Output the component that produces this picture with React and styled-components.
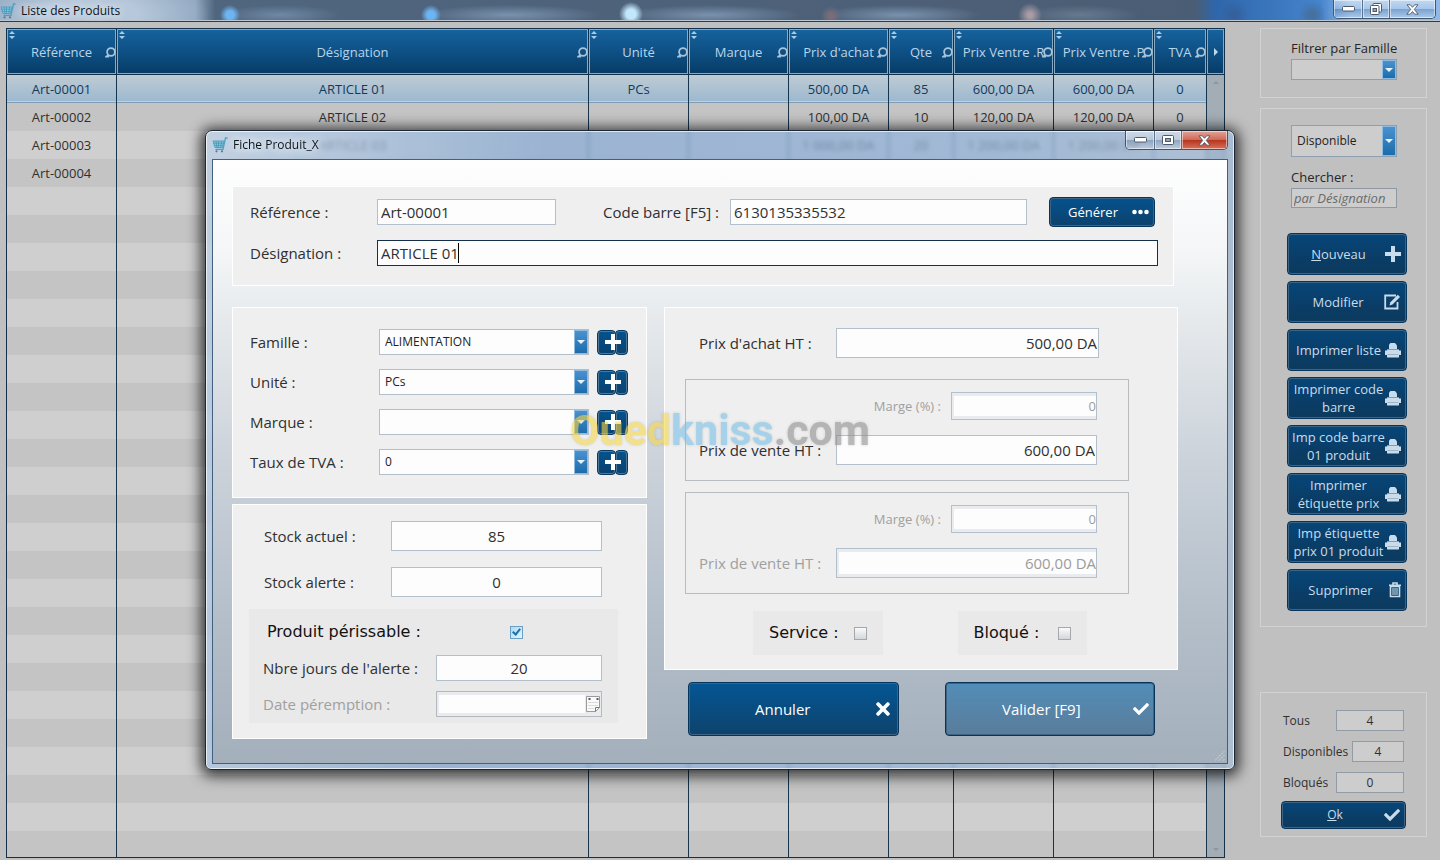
import React from "react";
import styled, { createGlobalStyle, css } from "styled-components";
import { FaCheck, FaTimes } from "react-icons/fa";

const columns = [
  { key: "ref", label: "Référence", width: 110 },
  { key: "name", label: "Désignation" },
  { key: "unit", label: "Unité", width: 100 },
  { key: "brand", label: "Marque", width: 100 },
  { key: "buy", label: "Prix d'achat", width: 100 },
  { key: "qty", label: "Qte", width: 65 },
  { key: "retail", label: "Prix Ventre .R", width: 100 },
  { key: "partner", label: "Prix Ventre .P", width: 100 },
  { key: "vat", label: "TVA", width: 53 },
];

const products = [
  {
    ref: "Art-00001",
    name: "ARTICLE 01",
    unit: "PCs",
    buy: "500,00 DA",
    qty: "85",
    retail: "600,00 DA",
    partner: "600,00 DA",
    vat: "0",
  },
  {
    ref: "Art-00002",
    name: "ARTICLE 02",
    buy: "100,00 DA",
    qty: "10",
    retail: "120,00 DA",
    partner: "120,00 DA",
    vat: "0",
  },
  {
    ref: "Art-00003",
    name: "ARTICLE 03",
    buy: "1 000,00 DA",
    qty: "20",
    retail: "1 200,00 DA",
    partner: "1 200,00 DA",
  },
  { ref: "Art-00004" },
];

const rows = [...products, ...Array.from({ length: 24 }, () => ({}))];

/* icons */

const CartIcon = () => (
  <svg width="16" height="16" viewBox="0 0 16 16" fill="none">
    <path d="M1 4h11l-1.5 6.5H3z" fill="#8cc6dc" stroke="#4fa3c4" />
    <path
      d="M4 4l1 6.500M6.500 4v6.500M9.500 4l-.7 6.500M1.500 6.200h10M2 8.400h9"
      stroke="#3f93b5"
      strokeWidth=".7"
    />
    <path d="M15.500 1h-2L11 12.300H3.500" stroke="#4fa0bf" strokeWidth="1.300" />
    <circle cx="4.500" cy="14.300" r="1.100" fill="#4b7d94" />
    <circle cx="10" cy="14.300" r="1.100" fill="#4b7d94" />
  </svg>
);

const SortIcon = () => (
  <svg width="6" height="8" viewBox="0 0 6 8">
    <path d="M3 0l3 3H0zM3 8L0 5h6z" fill="#a9cde8" />
  </svg>
);

const SearchIcon = () => (
  <svg width="11" height="11" viewBox="0 0 11 11" fill="none">
    <circle cx="6" cy="5" r="3.900" stroke="#a8c4d8" strokeWidth="1.800" />
    <path d="M3.300 7.800L.8 9.700h3.200" stroke="#a8c4d8" strokeWidth="1.400" />
  </svg>
);

const PlusIcon = ({ size = 16 }) => (
  <svg width={size} height={size} viewBox="0 0 16 16">
    <path d="M6 0h4v6h6v4h-6v6H6v-6H0V6h6z" fill="currentColor" />
  </svg>
);

const EditIcon = () => (
  <svg width="17" height="16" viewBox="0 0 17 16" fill="none">
    <path
      d="M12 1.500H1.200V14.500H13.500V8"
      stroke="currentColor"
      strokeWidth="1.800"
    />
    <path d="M5.500 11.500l.9-3.200L13.800.8l2.200 2.100-7.500 7.600z" fill="currentColor" />
  </svg>
);

const PrinterIcon = () => (
  <svg width="16" height="16" viewBox="0 0 16 16">
    <path d="M4 7V2.500L5.500 1H10l2 2.500V7z" fill="currentColor" />
    <path d="M0 8.500h2V7.500h12v1h2V13h-2v2.500H2V13H0z" fill="currentColor" />
    <path d="M2 7.500h12M2.500 12.500h11" stroke="#8fa3b3" strokeWidth=".7" />
  </svg>
);

const TrashIcon = () => (
  <svg width="12" height="16" viewBox="0 0 12 16" fill="none">
    <path d="M0 3.200h12M4 3V1h4v2" stroke="currentColor" strokeWidth="1.600" />
    <path d="M1.500 4.500h9v10h-9z" stroke="currentColor" strokeWidth="1.600" />
    <path d="M4 6v7M6 6v7M8 6v7" stroke="currentColor" strokeWidth="1.100" />
  </svg>
);

const DotsIcon = () => (
  <svg width="17" height="6" viewBox="0 0 17 6" fill="currentColor">
    <circle cx="2.500" cy="3" r="2.300" />
    <circle cx="8.500" cy="3" r="2.300" />
    <circle cx="14.500" cy="3" r="2.300" />
  </svg>
);

const CalendarIcon = () => (
  <svg width="16" height="18" viewBox="0 0 16 18" fill="none">
    <path d="M1.500 1.500h13v11l-4 4h-9z" fill="#fafafa" stroke="#9a9a9a" />
    <path d="M14.500 12.500h-4v4" stroke="#777" />
    <path d="M3 4h3M4.500 3v2M11 4h3M12.500 3v2" stroke="#555" />
    <path
      d="M3.500 7.500h9M3.500 10.500h9M3.500 13.500h5"
      stroke="#bbb"
      strokeDasharray="1 1"
    />
  </svg>
);

const MinimizeGlyph = () => (
  <svg width="13" height="6" viewBox="0 0 13 6">
    <rect x=".5" y=".5" width="12" height="4.500" rx="1" fill="#fff" stroke="#4d5a6b" />
  </svg>
);

const MaximizeGlyph = () => (
  <svg width="12" height="10" viewBox="0 0 12 10" fill="none">
    <rect x=".5" y=".5" width="11" height="9" rx="1" fill="#fff" stroke="#4d5a6b" />
    <rect x="3.500" y="3.500" width="5" height="3" fill="#8ea4bf" stroke="#4d5a6b" />
  </svg>
);

const RestoreGlyph = () => (
  <svg width="12" height="12" viewBox="0 0 12 12" fill="none">
    <rect x="3" y=".5" width="8.500" height="8.500" rx="1" fill="#fff" stroke="#4d5a6b" />
    <rect x=".5" y="2.500" width="8.500" height="9" rx="1" fill="#fff" stroke="#4d5a6b" />
    <rect x="3" y="5.500" width="3.500" height="3" fill="#8ea4bf" stroke="#4d5a6b" />
  </svg>
);

const CloseGlyph = () => (
  <svg width="13" height="11" viewBox="0 0 13 11">
    <path
      d="M1 .8h3.300l2.200 2.500L8.700.8H12L8.300 5.400l3.900 4.800H8.800L6.500 7.500l-2.300 2.700H.8l3.900-4.800z"
      fill="#fff"
      stroke="#4d5a6b"
      strokeWidth=".9"
    />
  </svg>
);

const WindowControls = ({ glass }) => (
  <Controls>
    <ControlButton aria-label="Réduire" $width={28}>
      <MinimizeGlyph />
    </ControlButton>
    <ControlButton aria-label="Agrandir" $width={27}>
      {glass ? <RestoreGlyph /> : <MaximizeGlyph />}
    </ControlButton>
    <ControlButton aria-label="Fermer" $width={46} $danger={!glass}>
      <CloseGlyph />
    </ControlButton>
  </Controls>
);

const Combo = ({ id, value, label, height, dimmed }) => (
  <ComboBox $height={height}>
    <ComboSelect id={id} defaultValue={value} aria-label={label} $dimmed={dimmed}>
      <option value={value}>{value}</option>
    </ComboSelect>
    <ComboArrow />
  </ComboBox>
);

const ProductTable = () => (
  <TableFrame>
    <Table>
      <colgroup>
        {columns.map((col) => (
          <col key={col.key} width={col.width} />
        ))}
      </colgroup>
      <thead>
        <tr>
          {columns.map((col) => (
            <HeadCell key={col.key}>
              <SortMark>
                <SortIcon />
              </SortMark>
              {col.label}
              <SearchMark>
                <SearchIcon />
              </SearchMark>
            </HeadCell>
          ))}
        </tr>
      </thead>
      <tbody>
        {rows.map((row, i) => (
          <Row key={i} $selected={i === 0}>
            {columns.map((col) => (
              <Cell key={col.key}>{row[col.key]}</Cell>
            ))}
          </Row>
        ))}
      </tbody>
    </Table>
    <Rail>
      <RailHead aria-label="Colonnes suivantes">
        <Triangle $dir="right" />
      </RailHead>
      <RailTrack>
        <Triangle $dir="up" />
        <Triangle $dir="down" />
      </RailTrack>
    </Rail>
  </TableFrame>
);

const actions = [
  { label: "Modifier", icon: <EditIcon /> },
  { label: "Imprimer liste", icon: <PrinterIcon /> },
  { label: "Imprimer code barre", icon: <PrinterIcon /> },
  { label: "Imp code barre 01 produit", icon: <PrinterIcon /> },
  { label: "Imprimer étiquette prix", icon: <PrinterIcon /> },
  { label: "Imp étiquette prix 01 produit", icon: <PrinterIcon /> },
  { label: "Supprimer", icon: <TrashIcon /> },
];

const Sidebar = () => (
  <Aside>
    <FilterBox>
      <SideLabel htmlFor="filter">Filtrer par Famille</SideLabel>
      <Combo id="filter" value="" height={21} dimmed />
    </FilterBox>
    <ActionBox>
      <SearchGroup>
        <Combo value="Disponible" label="Disponibilité" height={32} dimmed />
        <SideLabel htmlFor="search">Chercher :</SideLabel>
        <SearchInput id="search" placeholder="par Désignation" />
      </SearchGroup>
      <ActionList>
        <ActionButton>
          <ButtonText>
            <u>N</u>ouveau
          </ButtonText>
          <PlusIcon />
        </ActionButton>
        {actions.map((action) => (
          <ActionButton key={action.label}>
            <ButtonText>{action.label}</ButtonText>
            {action.icon}
          </ActionButton>
        ))}
      </ActionList>
    </ActionBox>
    <TotalsBox>
      <TotalRow>
        <label htmlFor="all">Tous</label>
        <TotalInput id="all" defaultValue="4" $width={68} />
      </TotalRow>
      <TotalRow>
        <label htmlFor="available">Disponibles</label>
        <TotalInput id="available" defaultValue="4" $width={52} />
      </TotalRow>
      <TotalRow>
        <label htmlFor="blocked">Bloqués</label>
        <TotalInput id="blocked" defaultValue="0" $width={68} />
      </TotalRow>
      <OkButton>
        <ButtonText>
          <u>O</u>k
        </ButtonText>
        <FaCheck size={16} />
      </OkButton>
    </TotalsBox>
  </Aside>
);

const ProductDialog = () => (
  <Overlay>
    <Dialog role="dialog" aria-label="Fiche Produit_X">
      <DialogTitle>
        <CartIcon />
        <TitleText>Fiche Produit_X</TitleText>
        <WindowControls />
      </DialogTitle>
      <DialogBody>
        <IdentityPanel>
          <IdentityRow>
            <IdentityLabel htmlFor="ref">Référence :</IdentityLabel>
            <RefInput id="ref" defaultValue="Art-00001" />
            <IdentityLabel htmlFor="barcode">Code barre [F5] :</IdentityLabel>
            <TextInput id="barcode" defaultValue="6130135335532" />
            <GenerateButton>
              <ButtonText>Générer</ButtonText>
              <DotsIcon />
            </GenerateButton>
          </IdentityRow>
          <IdentityRow>
            <IdentityLabel htmlFor="name">Désignation :</IdentityLabel>
            <ActiveInput id="name" defaultValue="ARTICLE 01" />
          </IdentityRow>
        </IdentityPanel>

        <Columns>
          <LeftColumn>
            <ClassPanel>
              {[
                ["family", "Famille :", "ALIMENTATION"],
                ["unit", "Unité :", "PCs"],
                ["brand", "Marque :", ""],
                ["vat", "Taux de TVA :", "0"],
              ].map(([id, label, value]) => (
                <ClassRow key={id}>
                  <label htmlFor={id}>{label}</label>
                  <Combo id={id} value={value} height={26} />
                  <AddButton aria-label={`Ajouter ${label}`}>
                    <PlusIcon />
                  </AddButton>
                </ClassRow>
              ))}
            </ClassPanel>

            <StockPanel>
              <StockRow>
                <label htmlFor="stock">Stock actuel :</label>
                <CenterInput id="stock" defaultValue="85" $height={30} />
              </StockRow>
              <StockRow>
                <label htmlFor="alert">Stock alerte :</label>
                <CenterInput id="alert" defaultValue="0" $height={30} />
              </StockRow>
              <PerishBox>
                <PerishRow>
                  <BigLabel htmlFor="perish">Produit périssable :</BigLabel>
                  <PerishCheck id="perish" type="checkbox" defaultChecked />
                </PerishRow>
                <PerishRow>
                  <label htmlFor="days">Nbre jours de l'alerte :</label>
                  <CenterInput id="days" defaultValue="20" />
                </PerishRow>
                <PerishRow $muted>
                  <label htmlFor="expiry">Date péremption :</label>
                  <DateField>
                    <DateInput id="expiry" disabled />
                    <CalendarIcon />
                  </DateField>
                </PerishRow>
              </PerishBox>
            </StockPanel>
          </LeftColumn>

          <RightColumn>
            <PricePanel>
              <BuyRow>
                <label htmlFor="buy">Prix d'achat HT :</label>
                <PriceInput id="buy" defaultValue="500,00 DA" $height={30} />
              </BuyRow>
              <SellGroup>
                <MarginRow>
                  <label htmlFor="margin1">Marge (%) :</label>
                  <MarginInput id="margin1" defaultValue="0" disabled />
                </MarginRow>
                <PriceRow>
                  <label htmlFor="sell1">Prix de vente HT :</label>
                  <PriceInput id="sell1" defaultValue="600,00 DA" $height={30} />
                </PriceRow>
              </SellGroup>
              <SellGroup>
                <MarginRow>
                  <label htmlFor="margin2">Marge (%) :</label>
                  <MarginInput id="margin2" defaultValue="0" disabled />
                </MarginRow>
                <PriceRow $muted>
                  <label htmlFor="sell2">Prix de vente HT :</label>
                  <PriceInput
                    id="sell2"
                    defaultValue="600,00 DA"
                    $height={30}
                    disabled
                  />
                </PriceRow>
              </SellGroup>
              <FlagRow>
                <Flag>
                  <BigLabel htmlFor="service">Service :</BigLabel>
                  <Check id="service" type="checkbox" />
                </Flag>
                <Flag>
                  <BigLabel htmlFor="locked">Bloqué :</BigLabel>
                  <Check id="locked" type="checkbox" />
                </Flag>
              </FlagRow>
            </PricePanel>
            <DialogActions>
              <DialogButton>
                <ButtonText>Annuler</ButtonText>
                <FaTimes size={20} />
              </DialogButton>
              <DialogButton $light>
                <ButtonText>Valider [F9]</ButtonText>
                <FaCheck size={16} />
              </DialogButton>
            </DialogActions>
          </RightColumn>
        </Columns>
        <Grip width="10" height="10" viewBox="0 0 10 10">
          <path
            d="M0 9.500L9.500 0M4 9.500L9.500 4M8 9.500L9.500 8"
            stroke="#e2e8ee"
            strokeDasharray="1.500 1.500"
          />
        </Grip>
      </DialogBody>
    </Dialog>
  </Overlay>
);

const App = () => (
  <Page>
    <GlobalStyle />
    <TitleBar>
      <CartIcon />
      <TitleText>Liste des Produits</TitleText>
      <WindowControls glass />
    </TitleBar>
    <Main>
      <ProductTable />
      <Sidebar />
    </Main>
    <ProductDialog />
    <Watermark>
      <span>
        <WatermarkPart $color="#f5d547">Oued</WatermarkPart>
        <WatermarkPart $color="#73bfe6">kniss</WatermarkPart>
        <WatermarkPart $color="#8c8c8c">.com</WatermarkPart>
      </span>
    </Watermark>
  </Page>
);

const GlobalStyle = createGlobalStyle`
  *, *::before, *::after {
    box-sizing: border-box;
  }
  body {
    margin: 0;
    background: #c0c0c0;
    color: #303030;
    font: 13px/18px "Open Sans", "Noto Sans", sans-serif;
  }
  button, input, select {
    margin: 0;
    font: inherit;
    color: inherit;
    outline: none;
  }
  svg {
    flex: none;
  }
`;

const Page = styled.div`
  display: flex;
  flex-direction: column;
  height: 100vh;
  overflow: hidden;
`;

const TitleBar = styled.header`
  display: flex;
  flex: none;
  gap: 5px;
  height: 22px;
  padding: 0 4px 0 0;
  border-bottom: 1px solid #2c3c50;
  box-shadow: inset 0 -1px #b9c6d4;
  background:
    radial-gradient(ellipse 120px 40px at 90px 14px, #b7c8da 40%, transparent),
    radial-gradient(circle 10px at 230px 15px, #6db4f2 40%, transparent),
    radial-gradient(circle 10px at 431px 15px, #6db4f2 40%, transparent),
    radial-gradient(circle 12px at 631px 14px, #c2e6fb 40%, transparent),
    radial-gradient(circle 10px at 831px 16px, #7a6d78 20%, transparent),
    radial-gradient(circle 12px at 1030px 15px, #a99ca5 20%, transparent),
    radial-gradient(circle 14px at 1234px 15px, #34619c 20%, transparent),
    radial-gradient(circle 14px at 1312px 15px, #44719f 20%, transparent),
    radial-gradient(ellipse 60px 10px at 280px 15px, #7088a4, transparent),
    radial-gradient(ellipse 90px 10px at 510px 15px, #7a92ae, transparent),
    radial-gradient(ellipse 90px 10px at 710px 15px, #7a92ae, transparent),
    radial-gradient(ellipse 80px 10px at 900px 15px, #7a92ae, transparent),
    radial-gradient(ellipse 60px 10px at 1080px 15px, #66798f, transparent),
    linear-gradient(90deg, #8fa6c0 195px, #50667f 215px, #4b5d74 1195px, #2f66ab 1215px, #4583cb 1320px, #8fb8e6 1350px);

  > svg {
    align-self: center;
  }
`;

const TitleText = styled.span`
  flex: 1;
  align-self: center;
  color: #101418;
  font-size: 12px;
  text-shadow: 0 0 8px #e8f0f8, 0 0 8px #e8f0f8;
`;

const Controls = styled.div`
  display: flex;
  align-self: flex-start;
  border: 1px solid #42566e;
  border-top: 0;
  border-radius: 0 0 5px 5px;
  overflow: hidden;
`;

const ControlButton = styled.button`
  display: flex;
  align-items: center;
  justify-content: center;
  width: ${(p) => p.$width}px;
  height: 18px;
  padding: 0;
  border: 0;
  box-shadow: inset 0 0 0 1px rgba(255, 255, 255, 0.5);
  background: linear-gradient(
    rgba(255, 255, 255, 0.45),
    rgba(255, 255, 255, 0.2) 50%,
    rgba(60, 90, 130, 0.25) 50%,
    rgba(255, 255, 255, 0.25)
  );

  & + & {
    border-left: 1px solid #5b7089;
  }

  ${(p) =>
    p.$danger &&
    css`
      background: linear-gradient(#e0a599, #cf6a58 48%, #b5331d 50%, #d9705a);
    `}
`;

const Main = styled.main`
  display: flex;
  flex: 1;
  gap: 35px;
  min-height: 0;
  padding: 6px 13px 2px 6px;
`;

const TableFrame = styled.section`
  display: flex;
  flex: 1;
  align-items: flex-start;
  min-width: 0;
  border: solid #12304a;
  border-width: 1px 0 1px 1px;
  overflow: hidden;
`;

const Table = styled.table`
  flex: 1;
  width: 100%;
  table-layout: fixed;
  border-spacing: 0;
  text-align: center;
`;

const headFill = css`
  border: solid #12304a;
  border-width: 0 1px 1px 0;
  box-shadow: inset 0 0 0 1px #86a9c4;
  background: linear-gradient(#16639d, #0f5288 45%, #073c66);
`;

const HeadCell = styled.th`
  ${headFill}
  position: relative;
  height: 46px;
  padding: 0;
  color: #b9d5ea;
  font-weight: 400;
  white-space: nowrap;
`;

const SortMark = styled.span`
  position: absolute;
  top: 2px;
  left: 2px;

  svg {
    display: block;
  }
`;

const SearchMark = styled.span`
  position: absolute;
  top: 18px;
  right: 0;

  svg {
    display: block;
  }
`;

const Cell = styled.td`
  height: 28px;
  padding: 0;
  border-right: 1px solid #16344c;
`;

const Row = styled.tr`
  background: #cfcfcf;

  &:nth-child(even) {
    background: #c4c4c4;
  }

  ${(p) =>
    p.$selected &&
    css`
      color: #133a5c;
      background: linear-gradient(#bfccd4, #9ab7cf);

      ${Cell} {
        box-shadow: inset 0 -1px #7f9db5, inset 0 -2px #c3d0d9;
      }
    `}
`;

const Rail = styled.div`
  display: flex;
  flex: none;
  flex-direction: column;
  align-self: stretch;
  width: 18px;
`;

const RailHead = styled.button`
  ${headFill}
  display: flex;
  align-items: center;
  justify-content: center;
  height: 46px;
  padding: 0;
`;

const RailTrack = styled.div`
  display: flex;
  flex: 1;
  flex-direction: column;
  align-items: center;
  justify-content: space-between;
  padding: 6px 0;
  border-right: 1px solid #12304a;
  background: #a3adb5;
`;

const triangles = {
  right: "border-width: 4px 0 4px 4px; border-left-color: #b9d9ef;",
  up: "border-width: 0 3px 3px; border-bottom-color: #8c979f;",
  down: "border-width: 3px 3px 0; border-top-color: #8c979f;",
};

const Triangle = styled.i`
  width: 0;
  height: 0;
  border: solid transparent;
  ${(p) => triangles[p.$dir]}
`;

const Aside = styled.aside`
  display: flex;
  flex: none;
  flex-direction: column;
  width: 167px;
  padding-bottom: 21px;
`;

const SideBox = styled.section`
  border: 1px solid #d2d2d2;
`;

const FilterBox = styled(SideBox)`
  display: flex;
  flex-direction: column;
  gap: 2px;
  margin-bottom: 10px;
  padding: 10px 29px 17px 30px;
`;

const ActionBox = styled(SideBox)`
  padding: 16px 19px 15px 26px;
`;

const SearchGroup = styled.div`
  display: flex;
  flex-direction: column;
  padding: 0 10px 0 4px;
`;

const SideLabel = styled.label`
  color: #262626;
  white-space: nowrap;

  ${SearchGroup} & {
    margin: 11px 0 2px;
  }
`;

const SearchInput = styled.input`
  width: 100%;
  height: 20px;
  padding: 0 2px;
  border: 1px solid #8e99a4;
  background: #cdcdcd;
  font-style: italic;

  &::placeholder {
    color: #6a6a6a;
    opacity: 1;
  }
`;

const ActionList = styled.div`
  display: flex;
  flex-direction: column;
  gap: 6px;
  margin-top: 25px;
`;

const BlueButton = styled.button`
  display: flex;
  align-items: center;
  padding: 0 5px 0 4px;
  border: 1px solid #07345a;
  border-radius: 4px;
  box-shadow: inset 0 0 0 1px #3d6484;
  background: linear-gradient(#06467a, #0a3d66 60%, #0c3a5e);
  color: #c9dceb;
`;

const ActionButton = styled(BlueButton)`
  height: 42px;
`;

const ButtonText = styled.span`
  flex: 1;
`;

const TotalsBox = styled(SideBox)`
  display: flex;
  flex-direction: column;
  margin-top: auto;
  padding: 17px 20px 7px;
  font-size: 12px;
`;

const TotalRow = styled.div`
  display: flex;
  align-items: center;
  justify-content: space-between;
  height: 21px;
  margin: 0 2px 10px;
`;

const TotalInput = styled.input`
  width: ${(p) => p.$width}px;
  height: 21px;
  padding: 0;
  border: 1px solid #929ca6;
  background: #cdcdcd;
  text-align: center;
`;

const OkButton = styled(BlueButton)`
  height: 28px;
  margin-top: -2px;
`;

const ComboBox = styled.div`
  position: relative;
  height: ${(p) => p.$height}px;
`;

const ComboSelect = styled.select`
  appearance: none;
  display: block;
  width: 100%;
  height: 100%;
  padding: 0 20px 0 5px;
  border: 1px solid ${(p) => (p.$dimmed ? "#8e9fb0" : "#b3bfca")};
  border-radius: 0;
  background: ${(p) => (p.$dimmed ? "#cdcdcd" : "#fdfdfd")};
  color: #222;
  font-size: 12px;
`;

const ComboArrow = styled.span`
  position: absolute;
  inset: 1px 1px 1px auto;
  display: flex;
  align-items: center;
  justify-content: center;
  width: 14px;
  border: 1px solid #8fbbe0;
  background: linear-gradient(#4a92cf, #1c6cab);
  pointer-events: none;

  &::after {
    content: "";
    border: solid transparent;
    border-width: 4px 4px 0;
    border-top-color: #e6f3fc;
  }
`;

const Overlay = styled.div`
  position: fixed;
  inset: 0;
  display: flex;
  align-items: flex-start;
  justify-content: center;
  padding-top: 130px;
`;

const Dialog = styled.section`
  width: 1030px;
  max-width: 100%;
  padding: 0 6px 5px;
  border: 1px solid #1c2733;
  border-radius: 7px 7px 6px 6px;
  box-shadow: inset 0 0 0 1px rgba(255, 255, 255, 0.7),
    0 2px 14px 4px rgba(0, 0, 0, 0.75);
  background: linear-gradient(
    100deg,
    rgba(190, 210, 232, 0.75),
    rgba(133, 168, 210, 0.7) 30%,
    rgba(142, 176, 216, 0.7) 70%,
    rgba(170, 190, 212, 0.75)
  );
  backdrop-filter: blur(2px);
`;

const DialogTitle = styled.header`
  display: flex;
  gap: 5px;
  height: 28px;

  > svg {
    align-self: center;
  }
`;

const DialogBody = styled.div`
  position: relative;
  padding: 26px 49px 24px 19px;
  border: 1px solid #43617f;
  background: linear-gradient(
    #fefefe,
    #f4f6f7 15%,
    #e4e8eb 28%,
    #cbd2da 50%,
    #b2bdc8 78%,
    #a3afbb
  );
  font-size: 15px;
  line-height: 20px;
`;

const Panel = styled.section`
  border: 1px solid #fff;
  background: #efefef;
`;

const IdentityPanel = styled(Panel)`
  display: flex;
  flex-direction: column;
  gap: 13px;
  margin-right: 4px;
  padding: 10px 15px 19px 17px;
`;

const IdentityRow = styled.div`
  display: flex;
  align-items: center;
`;

const IdentityLabel = styled.label`
  flex: none;
  width: 127px;
  white-space: nowrap;

  input + & {
    margin-left: 47px;
  }
`;

const TextInput = styled.input`
  flex: 1;
  width: 100%;
  min-width: 0;
  height: ${(p) => p.$height || 26}px;
  padding: 0 3px;
  border: 1px solid #b3bfca;
  border-radius: 0;
  background: #fdfdfd;

  &:disabled {
    padding: 3px 0 3px 2px;
    background: linear-gradient(#fdfdfd, #fdfdfd) content-box, #e9ebee;
    color: #9c9c9c;
  }
`;

const RefInput = styled(TextInput)`
  flex: none;
  width: 179px;
`;

/* focused field, with its text cursor */
const ActiveInput = styled(TextInput)`
  border-color: #14304a;
  background: linear-gradient(#000, #000) 80px center / 1px 20px no-repeat
    #fdfdfd;
`;

const GenerateButton = styled(BlueButton)`
  width: 106px;
  height: 30px;
  margin: 0 3px 0 22px;
  background: linear-gradient(#04528e, #0c426d);
  color: #fff;
  font-size: 13px;
`;

const Columns = styled.div`
  display: grid;
  grid-template-columns: 415px 1fr;
  gap: 17px;
  margin-top: 21px;
`;

const LeftColumn = styled.div`
  display: flex;
  flex-direction: column;
  gap: 6px;
`;

const ClassPanel = styled(Panel)`
  display: flex;
  flex-direction: column;
  gap: 14px;
  padding: 21px 17px 22px;
`;

const ClassRow = styled.div`
  display: grid;
  grid-template-columns: 129px 210px 31px;
  align-items: center;

  button {
    margin-left: 8px;
  }
`;

const AddButton = styled.button`
  position: relative;
  display: flex;
  align-items: center;
  justify-content: center;
  width: 31px;
  height: 25px;
  padding: 0;
  border: 0;
  background: none;
  color: #fff;

  &::before,
  &::after {
    content: "";
    position: absolute;
    inset: 0 12px 0 0;
    border: 1px solid #083a63;
    border-radius: 4px;
    box-shadow: inset 0 0 0 1px #4d7896;
    background: linear-gradient(#04528e, #0c426d);
  }

  &::after {
    inset: 0 0 0 18px;
  }

  svg {
    position: relative;
    z-index: 1;
  }
`;

const StockPanel = styled(Panel)`
  display: flex;
  flex-direction: column;
  gap: 16px;
  padding: 16px 28px 15px 16px;
`;

const StockRow = styled.div`
  display: grid;
  grid-template-columns: 127px 1fr;
  align-items: center;
  padding: 0 16px 0 15px;
`;

const CenterInput = styled(TextInput)`
  text-align: center;
`;

const PerishBox = styled.div`
  display: flex;
  flex-direction: column;
  gap: 10px;
  margin-top: -4px;
  padding: 10px 16px 6px 14px;
  background: #e9e9e9;
`;

const PerishRow = styled.div`
  display: grid;
  grid-template-columns: 173px 1fr;
  align-items: center;
  min-height: 26px;
  color: ${(p) => (p.$muted ? "#a0a0a0" : "inherit")};
  white-space: nowrap;
`;

const BigLabel = styled.label`
  color: #111;
  font: 16px/20px "DejaVu Sans", sans-serif;

  ${PerishRow} & {
    padding-left: 4px;
  }
`;

const Check = styled.input`
  appearance: none;
  width: 13px;
  height: 13px;
  border: 1px solid #a4a7ab;
  background: linear-gradient(#fafafa, #d3d6d9);

  &:checked {
    border-color: #6b9fc4;
    background: linear-gradient(135deg, #a9dcf2, #e3f6fd);
  }

  &:checked::before {
    content: "";
    display: block;
    width: 5px;
    height: 8px;
    margin-left: 3px;
    border: solid #1f6fae;
    border-width: 0 2px 2px 0;
    transform: rotate(40deg);
  }
`;

const PerishCheck = styled(Check)`
  margin-left: 74px;
`;

const DateField = styled.div`
  display: flex;
  align-items: center;
  height: 26px;
  border: 1px solid #b3b9bf;
  background: #e9ebee;
`;

const DateInput = styled(TextInput)`
  height: 24px;
  border: 0;
`;

const RightColumn = styled.div`
  display: flex;
  flex-direction: column;
  gap: 12px;
`;

const PricePanel = styled(Panel)`
  display: flex;
  flex-direction: column;
  gap: 11px;
  padding: 20px 48px 14px 20px;
`;

const PriceRow = styled.div`
  display: grid;
  grid-template-columns: 137px 1fr;
  align-items: center;
  color: ${(p) => (p.$muted ? "#a0a0a0" : "#303030")};
  white-space: nowrap;
`;

const BuyRow = styled(PriceRow)`
  margin-bottom: 10px;
  padding: 0 30px 0 14px;
`;

const SellGroup = styled.div`
  display: flex;
  flex-direction: column;
  gap: 15px;
  padding: 12px 31px 15px 13px;
  border: 1px solid #b9bcbf;
`;

const MarginRow = styled.div`
  display: flex;
  align-items: center;
  justify-content: flex-end;
  gap: 10px;
  color: #a0a0a0;
  font-size: 13px;
`;

const PriceInput = styled(TextInput)`
  padding: 0 1px;
  text-align: right;
`;

const MarginInput = styled(PriceInput)`
  flex: none;
  width: 146px;
  height: 28px;
`;

const FlagRow = styled.div`
  display: flex;
  gap: 75px;
  padding: 6px 42px 0 68px;
`;

const Flag = styled.div`
  display: flex;
  flex: 1;
  align-items: center;
  justify-content: space-between;
  height: 44px;
  padding: 0 16px;
  background: #e9e9e9;
`;

const DialogActions = styled.div`
  display: flex;
  gap: 46px;
  padding: 0 23px 0 24px;
`;

const DialogButton = styled(BlueButton)`
  flex: 1;
  height: 54px;
  background: ${(p) =>
    p.$light
      ? "linear-gradient(#528db8, #5a7c9a)"
      : "linear-gradient(#045694, #0e436c)"};
  color: #fff;
`;

const Grip = styled.svg`
  position: absolute;
  right: 2px;
  bottom: 2px;
`;

const Watermark = styled.div`
  position: fixed;
  inset: 0;
  display: grid;
  place-items: center;
  opacity: 0.6;
  pointer-events: none;
  font: 700 43px/50px Roboto, sans-serif;
  text-shadow: 0 0 3px rgba(120, 120, 120, 0.5);
`;

const WatermarkPart = styled.span`
  color: ${(p) => p.$color};
`;

export default App;
